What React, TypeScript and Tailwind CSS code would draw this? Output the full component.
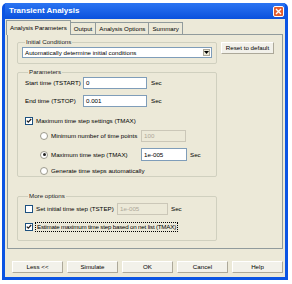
import React from "react";

const Check = ({ checked }: { checked?: boolean }) => (
  <span className="w-[8px] h-[8px] border border-[#1C5180] bg-white flex items-center justify-center shrink-0">
    {checked && (
      <svg width="6" height="6" viewBox="0 0 6 6">
        <path d="M0.8 2.6 L2.3 4.2 L5.2 1" stroke="#1F1F1F" strokeWidth="1.2" fill="none" />
      </svg>
    )}
  </span>
);

const Radio = ({ checked }: { checked?: boolean }) => (
  <span className="w-[8px] h-[8px] rounded-full border border-[#9C9A8C] bg-white flex items-center justify-center shrink-0">
    {checked && <span className="w-[3px] h-[3px] rounded-full bg-[#222]" />}
  </span>
);

const Input = ({ value, disabled, w, h = "h-[12px]" }: { value: string; disabled?: boolean; w: string; h?: string }) => (
  <div
    className={`${w} ${h} shrink-0 border flex items-center pl-[2px] ${
      disabled ? "bg-[#ECE9D8] border-[#CBC7B8] text-[#ACA899]" : "bg-white border-[#7F9DB9] text-black"
    }`}
  >
    {value}
  </div>
);

const Btn = ({ label, w = "w-[51px]" }: { label: string; w?: string }) => (
  <div className={`${w} h-[12px] shrink-0 bg-[#F2F1EA] border border-[#ACA899] border-l-white border-t-white flex items-center justify-center text-black`}>
    {label}
  </div>
);

export default function App() {
  return (
    <div
      className="w-[292px] h-[284px] bg-white pt-[3px] pl-[2px] text-[6.2px] leading-[8px] text-black whitespace-nowrap"
      style={{ fontFamily: '"Liberation Sans", Arial, sans-serif' }}
    >
      <div className="w-[286px] h-[277px] flex flex-col bg-[#0B54E3] rounded-t-[5px] px-[3px] pb-[3px]">
        <div className="h-[16px] flex items-center justify-between pl-[4px] pr-[1px] bg-gradient-to-b from-[#2B74F2] to-[#0A51DD]">
          <span className="text-white font-bold text-[8px]">Transient Analysis</span>
          <span className="w-[11px] h-[11px] rounded-[2px] bg-[#E45E2F] border border-white flex items-center justify-center mt-[1px]">
            <svg width="7" height="7" viewBox="0 0 7 7">
              <path d="M1 1 L6 6 M6 1 L1 6" stroke="white" strokeWidth="1.4" />
            </svg>
          </span>
        </div>
        <div className="flex-1 bg-[#ECE9D8] flex flex-col">
          <div className="flex items-end pl-[1px] pt-[1px] h-[15px] relative z-10">
            <div className="h-[15px] px-[3px] bg-[#ECE9D8] border border-b-0 border-[#919B9C] flex items-center -mb-[1px]">
              Analysis Parameters
            </div>
            <div className="h-[12px] px-[3px] border-t border-r border-[#919B9C] flex items-center">Output</div>
            <div className="h-[12px] px-[3px] border-t border-r border-[#919B9C] flex items-center">Analysis Options</div>
            <div className="h-[12px] px-[3px] border-t border-r border-[#919B9C] flex items-center">Summary</div>
          </div>
          <div className="mx-[2px] h-[215px] border border-[#919B9C] flex flex-col pl-[9px]">
            <div className="flex items-start mt-[3px]">
              <fieldset className="w-[200px] h-[26px] border border-[#D0D0BF] rounded-[2px] px-[4px]">
                <legend className="px-[1px] ml-[3px] text-[#222]">Initial Conditions</legend>
                <div className="mt-[1px] h-[11px] bg-white border border-[#7F9DB9] flex items-center justify-between pl-[2px] pr-[1px]">
                  <span>Automatically determine initial conditions</span>
                  <span className="w-[7px] h-[7px] bg-[#ECE9D8] border border-[#ACA899] flex items-center justify-center">
                    <svg width="5" height="3" viewBox="0 0 5 3">
                      <path d="M0 0 L5 0 L2.5 3 Z" fill="black" />
                    </svg>
                  </span>
                </div>
              </fieldset>
              <div className="ml-[4px] mt-[4px]">
                <Btn label="Reset to default" w="w-[53px]" />
              </div>
            </div>
            <fieldset className="w-[200px] h-[109px] mt-[4px] border border-[#D0D0BF] rounded-[2px] pl-[7px]">
              <legend className="px-[1px] ml-[3px] text-[#222]">Parameters</legend>
              <div className="flex items-center mt-[1px]">
                <span className="w-[58px]">Start time (TSTART)</span>
                <Input value="0" w="w-[64px]" />
                <span className="ml-[4px]">Sec</span>
              </div>
              <div className="flex items-center mt-[6px]">
                <span className="w-[58px]">End time (TSTOP)</span>
                <Input value="0.001" w="w-[64px]" />
                <span className="ml-[4px]">Sec</span>
              </div>
              <div className="flex items-center mt-[8px] h-[12px] gap-[3px]">
                <Check checked />
                <span>Maximum time step settings (TMAX)</span>
              </div>
              <div className="flex items-center mt-[3px] pl-[15px]">
                <Radio />
                <span className="ml-[3px] w-[90px]">Minimum number of time points</span>
                <Input value="100" disabled w="w-[45px]" />
              </div>
              <div className="flex items-center mt-[6px] pl-[15px]">
                <Radio checked />
                <span className="ml-[3px] w-[90px]">Maximum time step (TMAX)</span>
                <Input value="1e-005" w="w-[46px]" h="h-[13px]" />
                <span className="ml-[3px]">Sec</span>
              </div>
              <div className="flex items-center mt-[5px] pl-[15px] h-[10px]">
                <Radio />
                <span className="ml-[3px]">Generate time steps automatically</span>
              </div>
            </fieldset>
            <fieldset className="w-[200px] h-[49px] mt-[15px] border border-[#D0D0BF] rounded-[2px] pl-[7px]">
              <legend className="px-[1px] ml-[3px] text-[#222]">More options</legend>
              <div className="flex items-center mt-[3px]">
                <Check />
                <span className="ml-[3px] w-[81px]">Set initial time step (TSTEP)</span>
                <Input value="1e-005" disabled w="w-[51px]" />
                <span className="ml-[3px]">Sec</span>
              </div>
              <div className="flex items-center mt-[7px]">
                <Check checked />
                <span className="ml-[2px] px-[1px] border border-dotted border-black tracking-[-0.2px]">
                  Estimate maximum time step based on net list (TMAX)
                </span>
              </div>
            </fieldset>
          </div>
          <div className="flex pl-[7px] mt-[12px] gap-[4px]">
            <Btn label="Less <<" />
            <Btn label="Simulate" />
            <Btn label="OK" />
            <Btn label="Cancel" />
            <Btn label="Help" />
          </div>
        </div>
      </div>
    </div>
  );
}
